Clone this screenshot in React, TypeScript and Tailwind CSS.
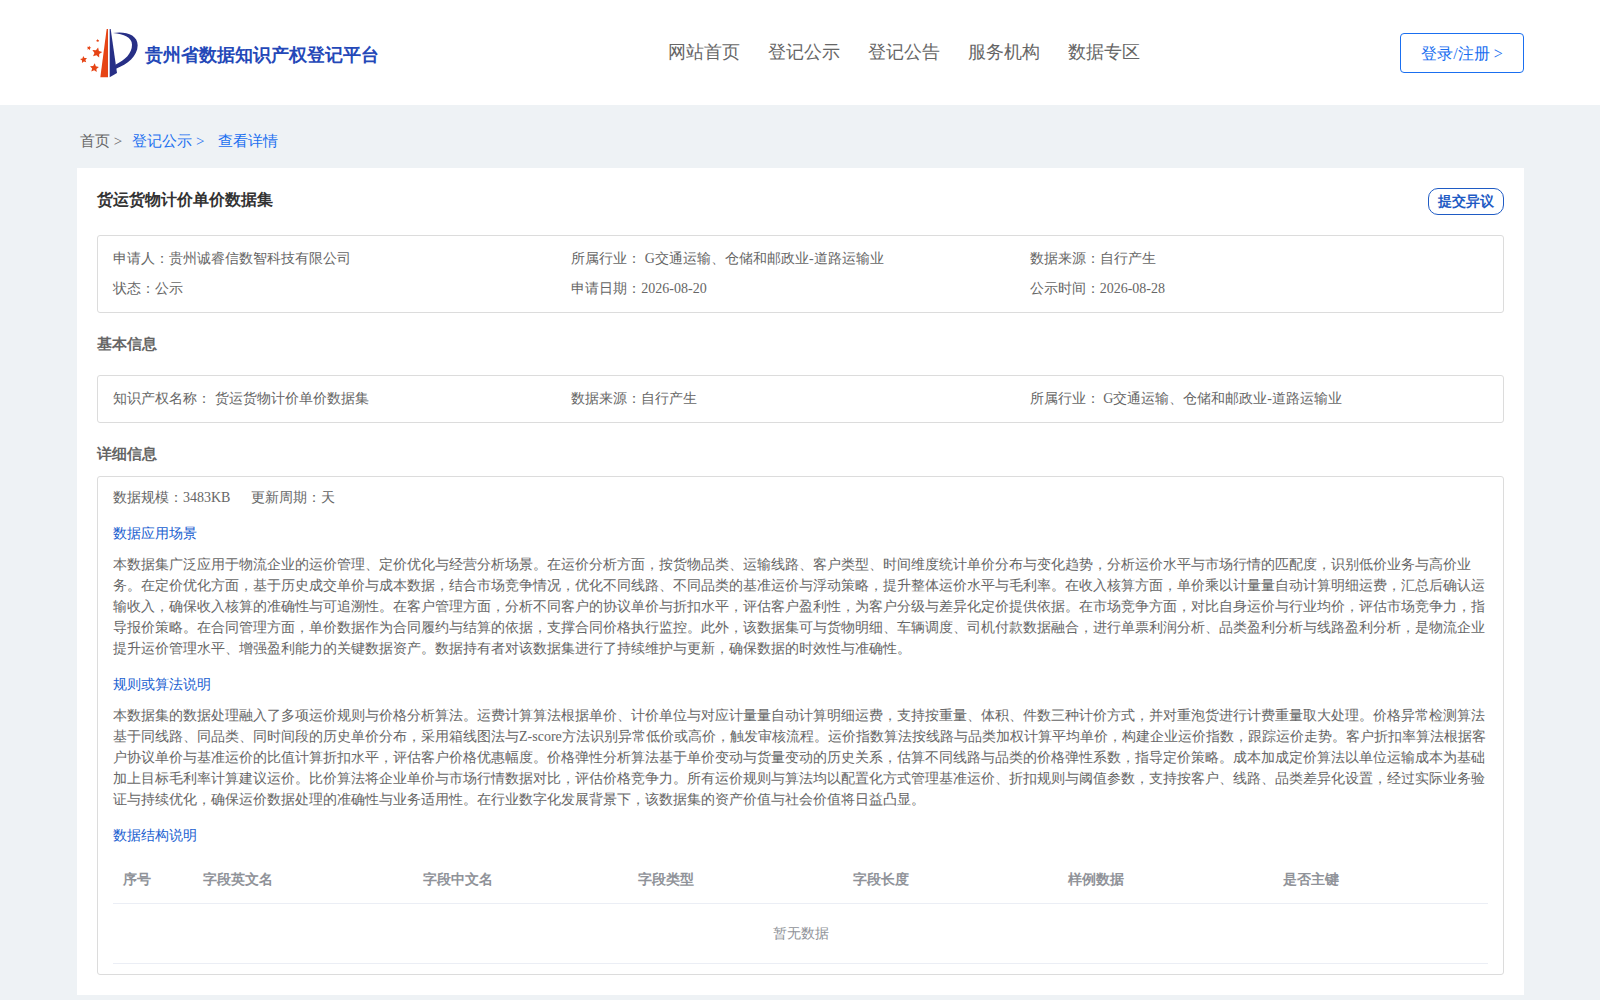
import React from "react";

const NAV = ["网站首页", "登记公示", "登记公告", "服务机构", "数据专区"];

const SUMMARY = [
  "申请人：贵州诚睿信数智科技有限公司",
  "所属行业： G交通运输、仓储和邮政业-道路运输业",
  "数据来源：自行产生",
  "状态：公示",
  "申请日期：2026-08-20",
  "公示时间：2026-08-28",
];

const BASIC = [
  "知识产权名称： 货运货物计价单价数据集",
  "数据来源：自行产生",
  "所属行业： G交通运输、仓储和邮政业-道路运输业",
];

const SCENARIO =
  "本数据集广泛应用于物流企业的运价管理、定价优化与经营分析场景。在运价分析方面，按货物品类、运输线路、客户类型、时间维度统计单价分布与变化趋势，分析运价水平与市场行情的匹配度，识别低价业务与高价业务。在定价优化方面，基于历史成交单价与成本数据，结合市场竞争情况，优化不同线路、不同品类的基准运价与浮动策略，提升整体运价水平与毛利率。在收入核算方面，单价乘以计量量自动计算明细运费，汇总后确认运输收入，确保收入核算的准确性与可追溯性。在客户管理方面，分析不同客户的协议单价与折扣水平，评估客户盈利性，为客户分级与差异化定价提供依据。在市场竞争方面，对比自身运价与行业均价，评估市场竞争力，指导报价策略。在合同管理方面，单价数据作为合同履约与结算的依据，支撑合同价格执行监控。此外，该数据集可与货物明细、车辆调度、司机付款数据融合，进行单票利润分析、品类盈利分析与线路盈利分析，是物流企业提升运价管理水平、增强盈利能力的关键数据资产。数据持有者对该数据集进行了持续维护与更新，确保数据的时效性与准确性。";

const ALGORITHM =
  "本数据集的数据处理融入了多项运价规则与价格分析算法。运费计算算法根据单价、计价单位与对应计量量自动计算明细运费，支持按重量、体积、件数三种计价方式，并对重泡货进行计费重量取大处理。价格异常检测算法基于同线路、同品类、同时间段的历史单价分布，采用箱线图法与Z-score方法识别异常低价或高价，触发审核流程。运价指数算法按线路与品类加权计算平均单价，构建企业运价指数，跟踪运价走势。客户折扣率算法根据客户协议单价与基准运价的比值计算折扣水平，评估客户价格优惠幅度。价格弹性分析算法基于单价变动与货量变动的历史关系，估算不同线路与品类的价格弹性系数，指导定价策略。成本加成定价算法以单位运输成本为基础加上目标毛利率计算建议运价。比价算法将企业单价与市场行情数据对比，评估价格竞争力。所有运价规则与算法均以配置化方式管理基准运价、折扣规则与阈值参数，支持按客户、线路、品类差异化设置，经过实际业务验证与持续优化，确保运价数据处理的准确性与业务适用性。在行业数字化发展背景下，该数据集的资产价值与社会价值将日益凸显。";

const COLUMNS = ["序号", "字段英文名", "字段中文名", "字段类型", "字段长度", "样例数据", "是否主键"];

const STARS = [
  { x: 57, y: 86, r: 16, turn: 12 },
  { x: 49, y: 132, r: 14, turn: 5 },
  { x: 17, y: 107, r: 11, turn: -8 },
  { x: 33, y: 72, r: 7, turn: 12 },
  { x: 59, y: 50, r: 5, turn: 0 },
];

function starPoints(x: number, y: number, r: number, turn: number) {
  return Array.from({ length: 10 }, (_, i) => {
    const radius = i % 2 === 0 ? r : r * 0.48;
    const angle = ((i * 36 - 90 + turn) * Math.PI) / 180;
    return `${x + radius * Math.cos(angle)},${y + radius * Math.sin(angle)}`;
  }).join(" ");
}

function Logo() {
  return (
    <svg viewBox="6 12 174 150" className="h-[50px] w-[58px]" aria-hidden="true">
      <path d="M86 15h4v145H67z" fill="#e64415" />
      <path d="M95 15h3L117 147 95 160z" fill="#272f86" />
      <path
        d="M105 27C142 21 179 32 179 64C179 96 148 122 114 134L112 122C142 107 162 88 162 62C162 40 138 30 105 27Z"
        fill="#272f86"
      />
      {STARS.map((s) => (
        <polygon key={s.x} points={starPoints(s.x, s.y, s.r, s.turn)} fill="#e64415" />
      ))}
    </svg>
  );
}

function InfoGrid({ items }: { items: string[] }) {
  return (
    <ul className="grid grid-cols-3 rounded-[3px] border border-[#dcdcdc] px-[15px] py-2 leading-[30px]">
      {items.map((t) => (
        <li key={t}>{t}</li>
      ))}
    </ul>
  );
}

function Detail({ title, text }: { title: string; text: string }) {
  return (
    <section>
      <h3 className="pt-[15px] pb-2.5 leading-[21px] text-[#2060d0]">{title}</h3>
      <p className="leading-[21px]">{text}</p>
    </section>
  );
}

export default function App() {
  return (
    <div className="min-h-screen bg-[#eef2f5] font-['Liberation_Serif',serif] text-sm text-[#666]">
      <header className="flex h-[105px] items-center justify-between bg-white pr-[76px] pl-20">
        <a href="#" className="flex items-center gap-[7px] text-lg font-bold text-[#2448b8]">
          <Logo />
          <span className="pt-1">贵州省数据知识产权登记平台</span>
        </a>
        <nav className="flex gap-7 pb-0.5 pl-7 text-lg">
          {NAV.map((n) => (
            <a key={n} href="#">
              {n}
            </a>
          ))}
        </nav>
        <button className="h-10 w-[124px] rounded border border-[#1a6ff0] pt-0.5 text-base text-[#1a6ff0]">
          登录/注册 &gt;
        </button>
      </header>

      <main className="pr-[76px] pl-[77px]">
        <nav className="flex h-[63px] items-center pt-2.5 pl-[3px] text-[15px]">
          <a href="#">首页 &gt;</a>
          <a href="#" className="ml-2.5 text-[#1a6ff0]">
            登记公示 &gt;
          </a>
          <a href="#" className="ml-3.5 text-[#1a6ff0]">
            查看详情
          </a>
        </nav>

        <div className="bg-white p-5">
          <div className="flex h-[47px] items-start justify-between">
            <h1 className="text-base font-bold text-[#333]">货运货物计价单价数据集</h1>
            <button className="h-[27px] w-[76px] rounded-[10px] border border-[#1f5bc4] font-bold text-[#1f5bc4]">
              提交异议
            </button>
          </div>

          <InfoGrid items={SUMMARY} />
          <h2 className="py-5 text-[15px] leading-[22px] font-bold">基本信息</h2>
          <InfoGrid items={BASIC} />
          <h2 className="pt-5 pb-[11px] text-[15px] leading-[22px] font-bold">详细信息</h2>

          <div className="rounded-[3px] border border-[#dcdcdc] px-[15px] py-2.5">
            <p className="flex gap-[21px] leading-[21px]">
              <span>数据规模：3483KB</span>
              <span>更新周期：天</span>
            </p>
            <Detail title="数据应用场景" text={SCENARIO} />
            <Detail title="规则或算法说明" text={ALGORITHM} />
            <h3 className="pt-[15px] pb-2.5 leading-[21px] text-[#2060d0]">数据结构说明</h3>
            <table className="w-full table-fixed border-separate border-spacing-0 text-left text-[#909399]">
              <colgroup>
                <col className="w-20" />
                <col className="w-[220px]" />
                <col />
                <col />
                <col />
                <col />
                <col />
              </colgroup>
              <thead>
                <tr>
                  {COLUMNS.map((c) => (
                    <th key={c} className="h-12 border-b border-[#ebeef5] px-2.5 font-bold">
                      {c}
                    </th>
                  ))}
                </tr>
              </thead>
              <tbody>
                <tr>
                  <td colSpan={7} className="h-[60px] border-b border-[#ebeef5] text-center">
                    暂无数据
                  </td>
                </tr>
              </tbody>
            </table>
          </div>
        </div>
      </main>
    </div>
  );
}
